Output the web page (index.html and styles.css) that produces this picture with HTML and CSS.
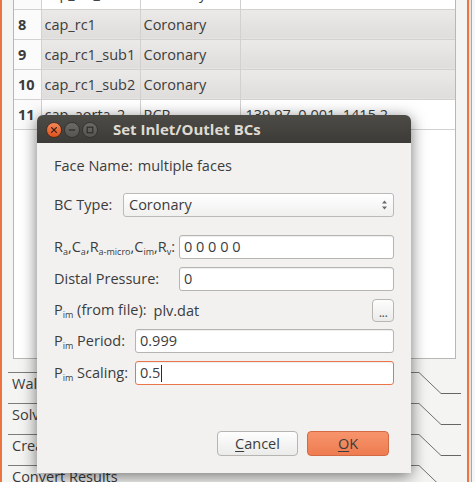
FILE: index.html
```html
<!DOCTYPE html>
<html>
<head>
<meta charset="utf-8">
<title>Set Inlet/Outlet BCs</title>
<link rel="stylesheet" href="styles.css">
</head>
<body>
<div class="app">
  <div class="edge-left"></div>
  <div class="main">
    <div class="frame">
      <table class="grid">
        <colgroup>
          <col class="c-hdr"><col class="c-name"><col class="c-type"><col class="c-val">
        </colgroup>
        <tr><th>7</th><td>cap_lc2_sub2</td><td>Coronary</td><td></td></tr>
        <tr class="sel"><th>8</th><td>cap_rc1</td><td>Coronary</td><td></td></tr>
        <tr class="sel"><th>9</th><td>cap_rc1_sub1</td><td>Coronary</td><td></td></tr>
        <tr class="sel"><th>10</th><td>cap_rc1_sub2</td><td>Coronary</td><td></td></tr>
        <tr><th>11</th><td>cap_aorta_2</td><td>RCR</td><td class="val">139.97, 0.001, 1415.2</td></tr>
      </table>
    </div>
    <div class="toolbox">
      <div class="tab"><span class="tab-label">Walls</span><svg class="tab-slant" width="22" height="31" viewBox="0 0 22 31"><line x1="0" y1="0.5" x2="22" y2="21.5"/></svg><span class="tab-tail"></span></div>
      <div class="tab"><span class="tab-label">Solver</span><svg class="tab-slant" width="22" height="31" viewBox="0 0 22 31"><line x1="0" y1="0.5" x2="22" y2="21.5"/></svg><span class="tab-tail"></span></div>
      <div class="tab"><span class="tab-label">Create Data Files</span><svg class="tab-slant" width="22" height="31" viewBox="0 0 22 31"><line x1="0" y1="0.5" x2="22" y2="21.5"/></svg><span class="tab-tail"></span></div>
      <div class="tab"><span class="tab-label">Convert Results</span><svg class="tab-slant" width="22" height="31" viewBox="0 0 22 31"><line x1="0" y1="0.5" x2="22" y2="21.5"/></svg><span class="tab-tail"></span></div>
    </div>
  </div>
  <div class="edge-right"></div>
</div>

<div class="dialog">
  <div class="titlebar">
    <div class="wbtns">
      <svg class="wbtn" width="16" height="16" viewBox="0 0 16 16">
        <defs>
          <linearGradient id="gc" x1="0" y1="0" x2="0" y2="1">
            <stop offset="0" stop-color="#f58a5c"/>
            <stop offset="1" stop-color="#dc4f1c"/>
          </linearGradient>
          <linearGradient id="gg" x1="0" y1="0" x2="0" y2="1">
            <stop offset="0" stop-color="#6c6b66"/>
            <stop offset="1" stop-color="#55544f"/>
          </linearGradient>
        </defs>
        <circle cx="8" cy="8" r="7.5" fill="url(#gc)" stroke="#3a2418" stroke-width="0.8"/>
        <path d="M5.6 5.6 L10.4 10.4 M10.4 5.6 L5.6 10.4" stroke="#3b2116" stroke-width="1.3" stroke-linecap="round"/>
      </svg>
      <svg class="wbtn" width="16" height="16" viewBox="0 0 16 16">
        <circle cx="8" cy="8" r="7.5" fill="url(#gg)" stroke="#2e2d2a" stroke-width="0.8"/>
        <path d="M4.8 8 L11.2 8" stroke="#2f2e2b" stroke-width="1.3"/>
      </svg>
      <svg class="wbtn" width="16" height="16" viewBox="0 0 16 16">
        <circle cx="8" cy="8" r="7.5" fill="url(#gg)" stroke="#2e2d2a" stroke-width="0.8"/>
        <rect x="5.2" y="5.2" width="5.6" height="5.6" fill="none" stroke="#2f2e2b" stroke-width="1.2"/>
      </svg>
    </div>
    <span class="title">Set Inlet/Outlet BCs</span>
  </div>
  <div class="dbody">
    <div class="face"><span>Face Name:</span><span class="face-val">multiple faces</span></div>
    <div class="bcrow">
      <span class="lbl-bc">BC Type:</span>
      <div class="combo"><span>Coronary</span>
        <svg class="arrows" width="7" height="12" viewBox="0 0 7 12"><path d="M3.5 1.5 L6 4.5 L1 4.5 Z M1 7.5 L6 7.5 L3.5 10.5 Z" fill="#6a6a6a"/></svg>
      </div>
    </div>
    <div class="form">
      <div class="frow">
        <span class="lbl lbl-wide">R<sub>a</sub>,C<sub>a</sub>,R<sub>a-micro</sub>,C<sub>im</sub>,R<sub>v</sub>:</span>
        <div class="input">0 0 0 0 0</div>
      </div>
      <div class="frow">
        <span class="lbl lbl-wide">Distal Pressure:</span>
        <div class="input">0</div>
      </div>
      <div class="frow frow-file">
        <span class="lbl">P<sub>im</sub> (from file):</span>
        <span class="file-val">plv.dat</span>
        <div class="browse"><span class="dots">...</span></div>
      </div>
      <div class="frow">
        <span class="lbl lbl-narrow">P<sub>im</sub> Period:</span>
        <div class="input">0.999</div>
      </div>
      <div class="frow">
        <span class="lbl lbl-narrow">P<sub>im</sub> Scaling:</span>
        <div class="input focus">0.5<span class="caret"></span></div>
      </div>
    </div>
    <div class="buttons">
      <div class="btn"><u>C</u>ancel</div>
      <div class="btn btn-ok"><u>O</u>K</div>
    </div>
  </div>
</div>
</body>
</html>
```

FILE: styles.css
```css
* { box-sizing: border-box; }

html, body {
  margin: 0;
  padding: 0;
}

body {
  width: 475px;
  height: 482px;
  overflow: hidden;
  position: relative;
  font-family: "Open Sans", "Noto Sans", sans-serif;
  font-size: 14.5px;
  color: #3c3c3c;
  background: #f2f1f0;
}

.app {
  display: flex;
  height: 482px;
}

.edge-left {
  flex: none;
  width: 2px;
  background: #ec7443;
}

.main {
  flex: 1;
  display: flex;
  flex-direction: column;
  background: #f4f4f3;
  overflow: hidden;
}

.edge-right {
  flex: none;
  width: 8px;
  background: linear-gradient(to right, #ec7443 0 2px, #e2e2e1 2px 4px, #a8a8a8 4px 5px, #f6f6f6 5px);
}

/* ---------- table ---------- */
.frame {
  flex: none;
  margin: -22px 11px 0 11px;
  height: 381px;
  border: 1px solid #b9b7b4;
  background: #ffffff;
}

.grid {
  border-collapse: collapse;
  table-layout: fixed;
  width: 100%;
}

.c-hdr { width: 27px; }
.c-name { width: 99px; }
.c-type { width: 100px; }

.grid tr { height: 30px; }

.grid th,
.grid td {
  height: 30px;
  padding: 0 0 0 3px;
  border-right: 1px solid #d3d1cf;
  border-bottom: 1px solid #d3d1cf;
  text-align: left;
  white-space: nowrap;
  overflow: hidden;
  line-height: 29px;
  font-weight: normal;
}

.grid th {
  padding-left: 4px;
  font-weight: bold;
  background: #fbfbfb;
}

.grid td:last-child { border-right: none; }

.grid tr.sel td {
  background: linear-gradient(#eceae8, #dedddb);
}

.grid td.val { padding-left: 5px; }

/* ---------- toolbox ---------- */
.toolbox {
  flex: none;
  margin-top: 13px;
  padding: 0 6px;
  display: flex;
  flex-direction: column;
}

.tab {
  display: flex;
  height: 31px;
}

.tab-label {
  flex: 1;
  border-top: 1px solid #7c7c7c;
  padding-left: 4px;
  line-height: 21px;
  white-space: nowrap;
  overflow: hidden;
}

.tab-slant {
  flex: none;
  display: block;
}

.tab-slant line {
  stroke: #6f6f6f;
  stroke-width: 1;
}

.tab-tail {
  flex: none;
  width: 20px;
  height: 22px;
  border-bottom: 1px solid #666;
}

/* ---------- dialog ---------- */
.dialog {
  position: absolute;
  left: 37px;
  top: 115px;
  width: 374px;
  height: 358px;
  background: #f2f1f0;
  border-radius: 6px 6px 0 0;
  box-shadow: 0 3px 16px rgba(0, 0, 0, 0.55);
}

.titlebar {
  height: 28px;
  display: flex;
  align-items: center;
  padding-left: 9px;
  border-radius: 6px 6px 0 0;
  background: linear-gradient(#4c4b46, #3c3b37);
}

.wbtns {
  display: flex;
  gap: 2px;
  margin-top: 2px;
}

.wbtn { display: block; }

.title {
  margin-left: 15px;
  font-weight: bold;
  font-size: 15px;
  color: #dfdbd2;
  white-space: nowrap;
}

.dbody {
  padding: 0 17px;
  display: flex;
  flex-direction: column;
}

.face {
  margin-top: 11px;
  height: 24px;
  line-height: 24px;
  display: flex;
  gap: 5px;
}

.bcrow {
  margin-top: 15px;
  height: 24px;
  display: flex;
  align-items: center;
}

.lbl-bc {
  width: 69px;
  line-height: 24px;
}

.combo {
  flex: 1;
  height: 24px;
  border: 1px solid #bcbab7;
  border-radius: 3px;
  background: linear-gradient(#ffffff, #f0f0ef);
  display: flex;
  align-items: center;
  justify-content: space-between;
  padding: 0 5px 0 5px;
  line-height: 22px;
}

.arrows { display: block; }

.form {
  margin-top: 18px;
  display: flex;
  flex-direction: column;
  gap: 8px;
}

.frow {
  display: flex;
  align-items: center;
  height: 24px;
}

.frow-file { height: 22px; }

.lbl {
  flex: none;
  line-height: 24px;
  white-space: nowrap;
}

.lbl-wide { width: 125px; }
.lbl-narrow { width: 81px; }

sub {
  font-size: 9px;
  line-height: 0;
  vertical-align: -3px;
}

.file-val {
  margin-left: 7px;
}

.input {
  flex: 1;
  height: 24px;
  border: 1px solid #b6b4b0;
  border-radius: 3px;
  background: #ffffff;
  box-shadow: inset 0 1px 1px rgba(0, 0, 0, 0.07);
  padding-left: 4px;
  line-height: 22px;
  display: flex;
  align-items: center;
}

.input.focus {
  border-color: #e8754b;
}

.caret {
  display: inline-block;
  width: 1px;
  height: 17px;
  background: #2b2b2b;
  margin-left: 1px;
}

.browse {
  margin-left: auto;
  width: 22px;
  height: 23px;
  border: 1px solid #b8b6b2;
  border-radius: 4px;
  background: linear-gradient(#fdfdfd, #ebebea);
  display: flex;
  justify-content: center;
  align-items: flex-end;
}

.dots {
  font-size: 13px;
  line-height: 16px;
  letter-spacing: -0.5px;
  color: #555;
  padding-bottom: 1px;
}

.buttons {
  margin-top: 46px;
  margin-right: 5px;
  display: flex;
  justify-content: flex-end;
  gap: 9px;
}

.btn {
  width: 81px;
  height: 25px;
  border: 1px solid #b7b5b1;
  border-radius: 4px;
  background: linear-gradient(#fefefe, #ebebea);
  text-align: center;
  line-height: 23px;
}

.btn u {
  text-underline-offset: 2px;
}

.btn-ok {
  width: 82px;
  border-color: #d26a43;
  background: linear-gradient(#f7946c, #ee7c50);
}
```
